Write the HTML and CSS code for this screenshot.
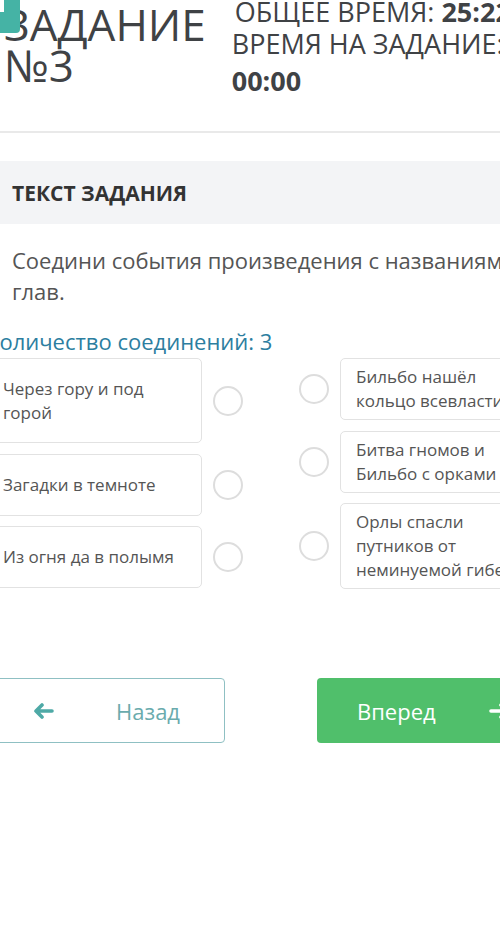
FILE: index.html
```html
<!DOCTYPE html>
<html lang="ru">
<head>
    <meta charset="UTF-8">
    <meta name="viewport" content="width=device-width, initial-scale=1.0">
    <title>Задание №3</title>
    <link rel="stylesheet" href="styles.css">
</head>
<body>
    <div class="menu-badge"></div>

    <header class="top">
        <h1 class="task-title">ЗАДАНИЕ<br>№3</h1>
        <div class="timer">
            <div class="timer-line first">ОБЩЕЕ ВРЕМЯ: <b>25:22</b></div>
            <div class="timer-line">ВРЕМЯ НА ЗАДАНИЕ:</div>
            <b class="timer-value">00:00</b>
        </div>
    </header>

    <div class="section-head">ТЕКСТ ЗАДАНИЯ</div>

    <p class="question">Соедини события произведения с названиями глав.</p>
    <p class="count">Количество соединений: 3</p>

    <div class="match">
        <div class="match-col left">
            <div class="match-row">
                <div class="card tall">Через гору и под горой</div>
                <span class="dot"></span>
            </div>
            <div class="match-row">
                <div class="card">Загадки в темноте</div>
                <span class="dot"></span>
            </div>
            <div class="match-row">
                <div class="card">Из огня да в полымя</div>
                <span class="dot"></span>
            </div>
        </div>
        <div class="match-col right">
            <div class="match-row">
                <span class="dot"></span>
                <div class="card">Бильбо нашёл кольцо всевластия</div>
            </div>
            <div class="match-row">
                <span class="dot"></span>
                <div class="card">Битва гномов и Бильбо с орками</div>
            </div>
            <div class="match-row">
                <span class="dot"></span>
                <div class="card tall">Орлы спасли путников от неминуемой гибели</div>
            </div>
        </div>
    </div>

    <div class="nav">
        <button class="btn btn-back">
            <svg width="20" height="16" viewBox="0 0 20 16"><path d="M8 2 L2 8 L8 14 M2.5 8 H18" fill="none" stroke="currentColor" stroke-width="3.6" stroke-linecap="round" stroke-linejoin="round"/></svg>
            <span>Назад</span>
        </button>
        <button class="btn btn-next">
            <span>Вперед</span>
            <svg width="20" height="16" viewBox="0 0 20 16"><path d="M12 2 L18 8 L12 14 M17.5 8 H2" fill="none" stroke="currentColor" stroke-width="3.6" stroke-linecap="round" stroke-linejoin="round"/></svg>
        </button>
    </div>
</body>
</html>
```

FILE: styles.css
```css
body {
    margin: 0;
    font-family: "Open Sans", "Noto Sans", sans-serif;
    color: #555;
    background-color: #fff;
    overflow: hidden;
    height: 947px;
}

.menu-badge {
    position: absolute;
    top: 0;
    left: 0;
    width: 20px;
    height: 33px;
    background-color: #45b3a5;
    border-bottom-right-radius: 4px;
    z-index: 2;
}

.menu-badge::before {
    content: "";
    position: absolute;
    top: 0;
    left: 0;
    width: 4px;
    height: 12px;
    background-color: #fff;
}

.top {
    display: flex;
    gap: 26px;
    height: 133px;
    box-sizing: border-box;
    padding-top: 4px;
    border-bottom: 2px solid #e9e9e9;
}

.task-title {
    margin: 0 0 0 4px;
    font-size: 44px;
    font-weight: 400;
    line-height: 41px;
    color: #3f4245;
    flex: none;
}

.timer {
    margin-top: -8px;
    font-size: 27px;
    line-height: 32px;
    color: #3f4245;
    white-space: nowrap;
}

.timer-line.first {
    padding-left: 3px;
}

.timer b {
    font-weight: 700;
}

.timer-value {
    display: block;
    margin-top: 5px;
}

.section-head {
    margin-top: 28px;
    height: 63px;
    padding-left: 12px;
    display: flex;
    align-items: center;
    background-color: #f3f4f6;
    font-size: 21px;
    font-weight: 700;
    color: #333;
}

.question {
    margin: 21px 0 0;
    padding-left: 12px;
    width: 518px;
    font-size: 22px;
    line-height: 31px;
    color: #555;
}

.count {
    margin: 20px 0 0 -14px;
    font-size: 22px;
    line-height: 28px;
    color: #2c7ea0;
}

.match {
    display: flex;
    gap: 56px;
    margin: 3px 0 0 -10px;
}

.match-col {
    display: flex;
    flex-direction: column;
    gap: 10px;
}

.match-row {
    display: flex;
    align-items: center;
    gap: 11px;
}

.card {
    box-sizing: border-box;
    display: flex;
    align-items: center;
    height: 62px;
    border: 1px solid #e2e2e2;
    border-radius: 5px;
    font-size: 17px;
    line-height: 24px;
    color: #555;
}

.left .card {
    width: 212px;
    padding: 0 20px 0 12px;
}

.right .card {
    width: 212px;
    padding: 0 23px 0 15px;
}

.left .card.tall {
    height: 85px;
}

.right .card.tall {
    height: 86px;
}

.match-col .match-row:first-child {
    margin-bottom: 1px;
}

.dot {
    flex: none;
    width: 30px;
    height: 30px;
    box-sizing: border-box;
    border: 2px solid #dddddd;
    border-radius: 50%;
}

.nav {
    display: flex;
    gap: 92px;
    margin: 89px 0 0 -7px;
}

.btn {
    flex: none;
    width: 232px;
    height: 65px;
    padding: 0 40px;
    display: flex;
    align-items: center;
    justify-content: space-between;
    border-radius: 4px;
    font-family: inherit;
    font-size: 22px;
    cursor: pointer;
}

.btn-back {
    padding-right: 44px;
    background-color: #fff;
    border: 1px solid #8fc0c3;
    color: #6aabad;
}

.btn-back svg {
    color: #4ea9a6;
}

.btn-next {
    background-color: #50bf6b;
    border: none;
    color: #fff;
}
```
